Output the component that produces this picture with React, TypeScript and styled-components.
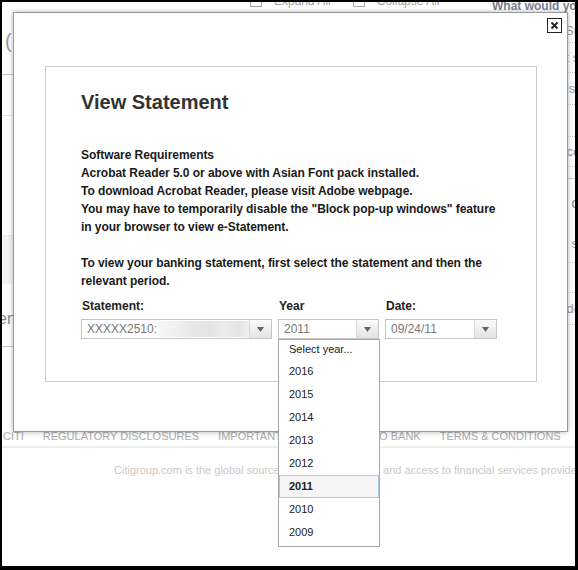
import React from "react";
import styled, { createGlobalStyle } from "styled-components";

const GlobalStyle = createGlobalStyle`
  body {
    margin: 0;
    background: #fff;
    font-family: "Liberation Sans", Arial, sans-serif;
  }
`;

const years = ["2016", "2015", "2014", "2013", "2012", "2011", "2010", "2009"];

const sideLinks = [
  { h: 25, text: "Download e-Statements" },
  { h: 30, text: "View account summary" },
  { h: 32, text: "Transfer funds now" },
  { h: 32, text: "" },
  { h: 30, text: "Update your contact" },
];

const sideLinks2 = [
  { h: 38, text: "Manage your signature" },
  { h: 30, text: "" },
  { h: 32, text: "Update your details" },
];

const App = () => {
  return (
    <>
      <GlobalStyle />
      <Frame>
        <Body>
          <Main>
            <ToggleRow>
              <Toggle>
                <CheckBox />
                Expand All
              </Toggle>
              <Toggle>
                <CheckBox />
                Collapse All
              </Toggle>
            </ToggleRow>
            <BgRow $h={66} $line="#c4c4c4">
              <Paren>(</Paren>
            </BgRow>
            <BgRow $h={41} $line="#e4e4e4" />
            <BgRow $h={120} $line="#e4e4e4" />
            <BgRow $h={48} $bg="#f4f4f4" />
            <BgRow $h={63} $line="#c4c4c4">
              <Cut>ent</Cut>
            </BgRow>
          </Main>
          <Sidebar>
            <SideTitle>What would you like to do?</SideTitle>
            {sideLinks.map((l, i) => (
              <SideLink key={i} $h={l.h}>
                {l.text}
              </SideLink>
            ))}
            <SideDivider />
            <SideHeading>To do more online</SideHeading>
            {sideLinks2.map((l, i) => (
              <SideLink key={i} $h={l.h}>
                {l.text}
              </SideLink>
            ))}
          </Sidebar>
        </Body>
        <FooterNav>
          <span>CITI</span>
          <span>REGULATORY DISCLOSURES</span>
          <span>IMPORTANT NOTICE</span>
          <span>LINK TO BANK</span>
          <span>TERMS &amp; CONDITIONS</span>
        </FooterNav>
        <Tagline>
          Citigroup.com is the global source of information about and access
          to financial services provided by the Citigroup family of companies.
        </Tagline>

        <Modal>
          <CloseButton aria-label="close">
            <svg width="9" height="9" viewBox="0 0 9 9">
              <path
                d="M1.5 1.5 L7.5 7.5 M7.5 1.5 L1.5 7.5"
                stroke="#222"
                strokeWidth="1.8"
              />
            </svg>
          </CloseButton>
          <Panel>
            <Title>View Statement</Title>
            <Copy>
              Software Requirements
              <br />
              Acrobat Reader 5.0 or above with Asian Font pack installed.
              <br />
              To download Acrobat Reader, please visit Adobe webpage.
              <br />
              You may have to temporarily disable the "Block pop-up windows"
              feature
              <br />
              in your browser to view e-Statement.
            </Copy>
            <Copy $mt="18px">
              To view your banking statement, first select the statement and
              then the
              <br />
              relevant period.
            </Copy>
            <Fields>
              <Field $w="191px">
                <Label>Statement:</Label>
                <Select>
                  <SelectText>
                    XXXXX2510:
                    <Redacted />
                  </SelectText>
                  <Arrow>
                    <ArrowIcon />
                  </Arrow>
                </Select>
              </Field>
              <Field $w="101px">
                <Label>Year</Label>
                <Select>
                  <SelectText>2011</SelectText>
                  <Arrow>
                    <ArrowIcon />
                  </Arrow>
                </Select>
                <Dropdown>
                  <Option $first>Select year...</Option>
                  {years.map((y) => (
                    <Option key={y} $active={y === "2011"}>
                      {y}
                    </Option>
                  ))}
                </Dropdown>
              </Field>
              <Field $w="112px">
                <Label>Date:</Label>
                <Select>
                  <SelectText>09/24/11</SelectText>
                  <Arrow>
                    <ArrowIcon />
                  </Arrow>
                </Select>
              </Field>
            </Fields>
          </Panel>
        </Modal>
      </Frame>
    </>
  );
};

const ArrowIcon = () => (
  <svg width="7" height="5" viewBox="0 0 7 5">
    <path d="M0 0 H7 L3.5 5 Z" fill="#666" />
  </svg>
);

const Frame = styled.div`
  position: relative;
  width: 578px;
  height: 570px;
  box-sizing: border-box;
  border: solid #000;
  border-width: 2px 3px 4px 2px;
  overflow: hidden;
  background: #fff;
`;

const Body = styled.div`
  display: grid;
  grid-template-columns: 490px 1fr;
  height: 427px;
`;

const Main = styled.div`
  display: flex;
  flex-direction: column;
`;

const ToggleRow = styled.div`
  display: flex;
  gap: 22px;
  height: 16px;
  margin-top: -9px;
  padding-left: 248px;
  align-items: center;
`;

const Toggle = styled.div`
  display: flex;
  align-items: center;
  gap: 12px;
  font-size: 12px;
  color: #a0a0a0;
`;

const CheckBox = styled.span`
  width: 12px;
  height: 12px;
  box-sizing: border-box;
  border: 1px solid #a8a8a8;
  background: #fff;
`;

const BgRow = styled.div<{ $h: number; $line?: string; $bg?: string }>`
  display: flex;
  align-items: center;
  height: ${(p) => p.$h}px;
  box-sizing: border-box;
  border-bottom: ${(p) => (p.$line ? `1px solid ${p.$line}` : "none")};
  background: ${(p) => p.$bg || "transparent"};
`;

const Paren = styled.span`
  padding-left: 3px;
  font-size: 20px;
  color: #999;
`;

const Cut = styled.span`
  margin-left: -4px;
  padding-top: 8px;
  font-size: 16px;
  color: #888;
`;

const Sidebar = styled.div`
  display: flex;
  flex-direction: column;
  white-space: nowrap;
`;

const SideTitle = styled.div`
  margin-top: -3px;
  height: 19px;
  font-size: 12px;
  font-weight: 700;
  line-height: 14px;
  color: #77808f;
`;

const SideLink = styled.div<{ $h: number }>`
  display: flex;
  align-items: center;
  height: ${(p) => p.$h}px;
  box-sizing: border-box;
  border-bottom: 1px dotted #cfcfcf;
  font-size: 13px;
  color: #9a9a9a;
`;

const SideDivider = styled.div`
  height: 11px;
  border-bottom: 1px solid #c8c8c8;
`;

const SideHeading = styled.div`
  display: flex;
  align-items: center;
  height: 46px;
  font-size: 15px;
  color: #8a8a8a;
`;

const FooterNav = styled.div`
  display: flex;
  gap: 19px;
  height: 19px;
  box-sizing: border-box;
  padding: 0 0 4px 1px;
  align-items: center;
  border-bottom: 2px solid #eee;
  font-size: 11px;
  color: #ababab;
  white-space: nowrap;
`;

const Tagline = styled.div`
  padding: 16px 0 0 112px;
  font-size: 11px;
  line-height: 13px;
  color: #c9c9c9;
  white-space: nowrap;
`;

const Modal = styled.div`
  position: absolute;
  left: 11px;
  top: 10px;
  width: 555px;
  height: 420px;
  box-sizing: border-box;
  padding: 53px 30px 0 31px;
  background: #fff;
  border: 1px solid #9a9a9a;
  box-shadow: 0 0 5px rgba(0, 0, 0, 0.3);
`;

const CloseButton = styled.button`
  position: absolute;
  top: 5px;
  right: 5px;
  width: 15px;
  height: 15px;
  padding: 0;
  display: flex;
  align-items: center;
  justify-content: center;
  border: 1px solid #222;
  background: #fff;
`;

const Panel = styled.div`
  height: 316px;
  box-sizing: border-box;
  border: 1px solid #cdcdcd;
  padding: 23px 0 0 35px;
  color: #1a1a1a;
`;

const Title = styled.h1`
  margin: 0;
  font-size: 20px;
  line-height: 24px;
  font-weight: 700;
  color: #333;
`;

const Copy = styled.p<{ $mt?: string }>`
  margin: ${(p) => p.$mt || "32px"} 0 0;
  font-size: 12px;
  line-height: 18px;
  font-weight: 700;
  letter-spacing: -0.05px;
  white-space: nowrap;
`;

const Fields = styled.div`
  display: flex;
  gap: 6px;
  margin-top: 7px;
`;

const Field = styled.div<{ $w: string }>`
  position: relative;
  display: flex;
  flex-direction: column;
  width: ${(p) => p.$w};
`;

const Label = styled.label`
  padding-left: 1px;
  margin-bottom: 4px;
  font-size: 12px;
  line-height: 18px;
  font-weight: 700;
  color: #222;
`;

const Select = styled.div`
  display: flex;
  align-items: stretch;
  height: 20px;
  box-sizing: border-box;
  border: 1px solid #c6c6c6;
  background: #fff;
`;

const SelectText = styled.div`
  flex: 1;
  display: flex;
  align-items: center;
  padding-left: 5px;
  overflow: hidden;
  white-space: nowrap;
  font-size: 12px;
  color: #777;
`;

const Redacted = styled.span`
  width: 90px;
  height: 16px;
  margin-left: 2px;
  background: linear-gradient(
    90deg,
    #f5f5f5 0%,
    #f0f0f0 20%,
    #e6e6e6 38%,
    #e3e3e3 55%,
    #ebebeb 72%,
    #e4e4e4 88%,
    #eeeeee 100%
  );
`;

const Arrow = styled.div`
  width: 21px;
  display: flex;
  align-items: center;
  justify-content: center;
  border-left: 1px solid #dadada;
  background: linear-gradient(#fbfbfb, #e3e3e3);
`;

const Dropdown = styled.div`
  position: absolute;
  top: 100%;
  left: 0;
  width: 102px;
  box-sizing: border-box;
  padding-bottom: 2px;
  border: 1px solid #a8a8a8;
  background: #fff;
  z-index: 2;
`;

const Option = styled.div<{ $first?: boolean; $active?: boolean }>`
  height: ${(p) => (p.$first ? "20px" : "23px")};
  line-height: ${(p) => (p.$first ? "17px" : "21px")};
  box-sizing: border-box;
  padding-left: 9px;
  border: 1px solid ${(p) => (p.$active ? "#a6c4f4" : "transparent")};
  background: ${(p) => (p.$active ? "#f5f5f5" : "#fff")};
  font-size: 11px;
  font-weight: ${(p) => (p.$active ? 700 : 400)};
  color: #222;
`;

export default App;
